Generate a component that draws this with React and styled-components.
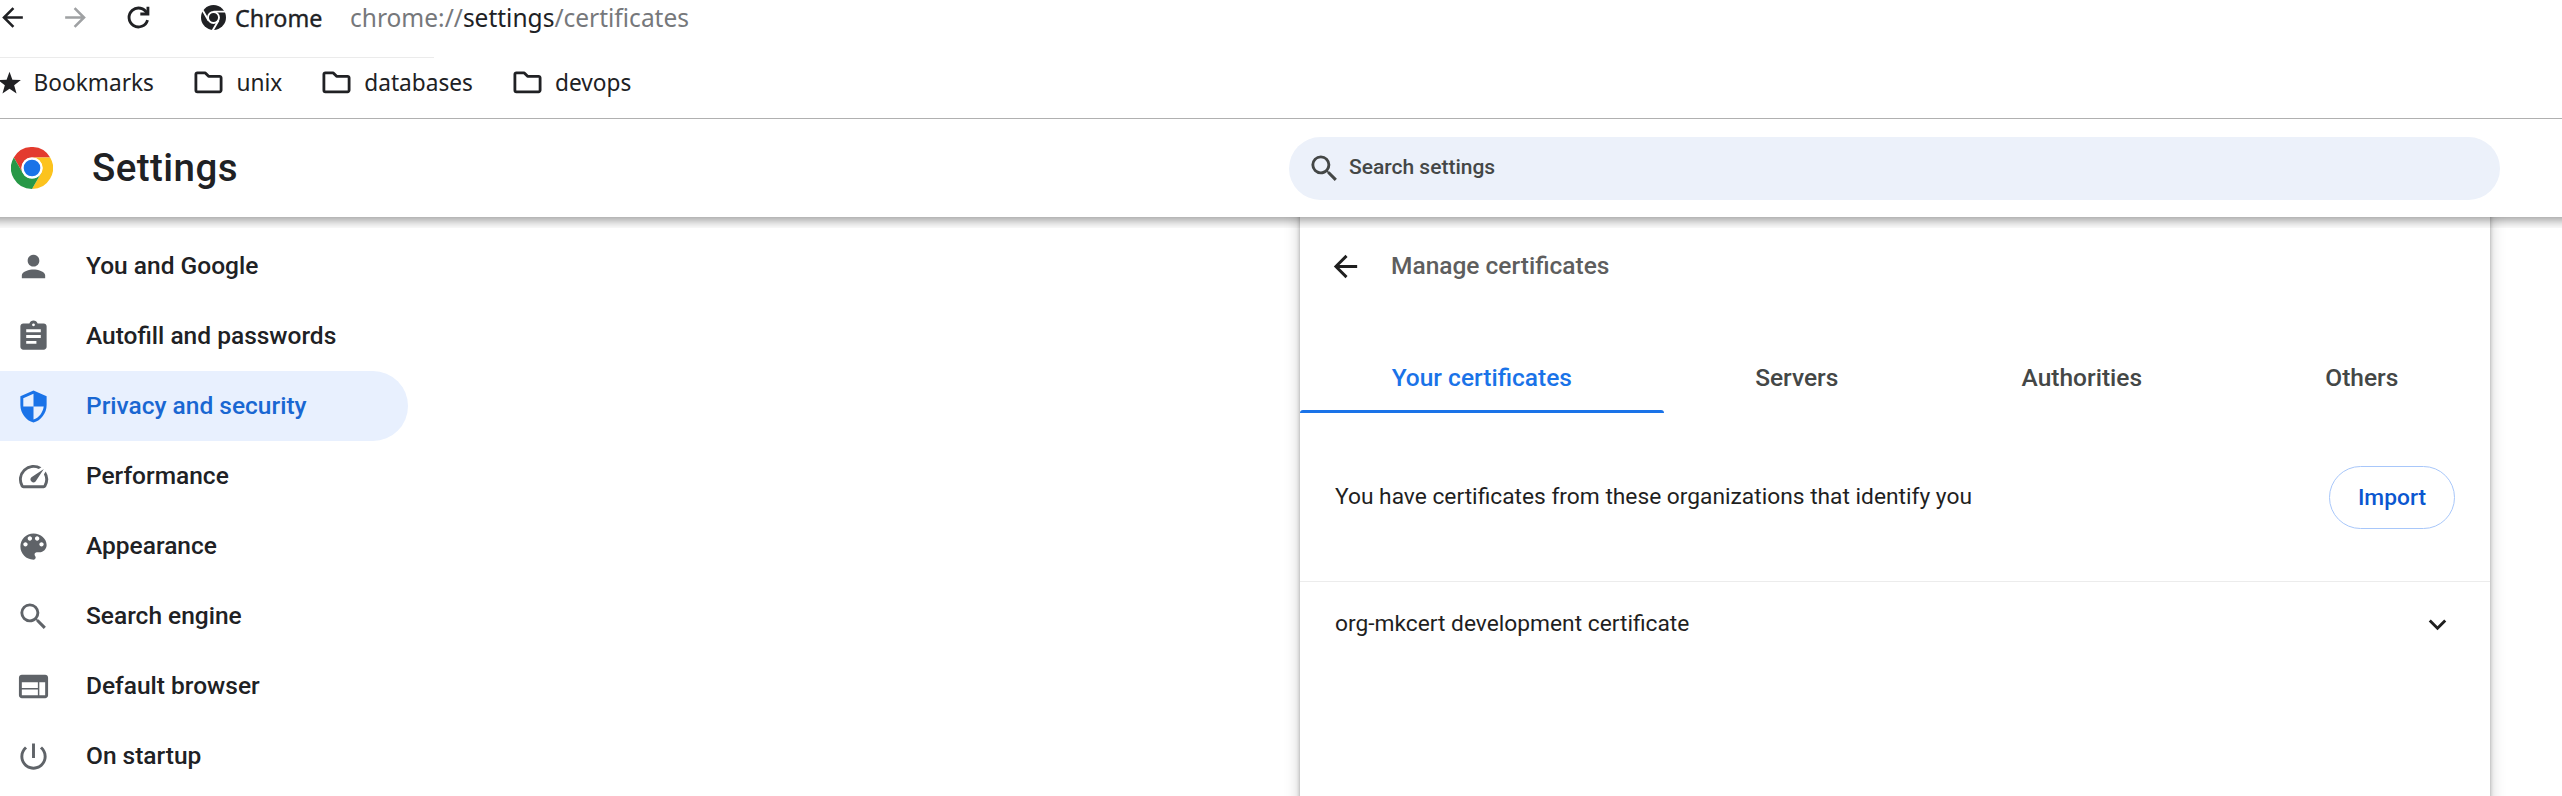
import React from 'react';
import styled, { createGlobalStyle } from 'styled-components';

const Global = createGlobalStyle`
  * { box-sizing: border-box; }
  html, body { margin: 0; background: #fff; overflow: hidden; }
  body { font-family: Roboto, sans-serif; color: #1f1f1f; }
`;

const Page = styled.div`
  height: 796px;
  display: flex;
  flex-direction: column;
  overflow: hidden;
`;

/* Browser chrome */
const Toolbar = styled.div`
  height: 57px;
  flex: none;
  display: flex;
  align-items: flex-start;
  font-family: "Noto Sans", sans-serif;
  font-size: 24.5px;
  line-height: 36px;
`;
const NavIcon = styled.svg`
  width: 31px;
  height: 31px;
  margin-top: 1.5px;
  flex: none;
  fill: ${(p) => (p.$muted ? '#9fa1a3' : '#202124')};
`;
const NavGroup = styled.div`
  display: flex;
  gap: 32px;
  margin-left: -3px;
`;
const SiteChip = styled.div`
  display: flex;
  align-items: flex-start;
  gap: 9px;
  margin-left: 47px;
  width: 149px;
  color: #202124;
  font-size: 23.33px;
  -webkit-text-stroke: 0.35px currentColor;
`;
const ChipIcon = styled.svg`
  width: 25px;
  height: 25px;
  margin-top: 5px;
  flex: none;
`;
const Url = styled.div`
  color: #76787b;
  b { font-weight: 400; color: #202124; }
`;
const BookmarkBar = styled.div`
  height: 62px;
  flex: none;
  display: flex;
  align-items: flex-start;
  border-bottom: 1px solid #b0b0b0;
  font-family: "Noto Sans", sans-serif;
  font-size: 22.67px;
  line-height: 36px;
  color: #202124;
  padding-top: 8px;
`;
const BarHairline = styled.div`
  width: 434px;
  height: 1px;
  margin-top: -8px;
  margin-right: -434px;
  background: #ebebeb;
`;
const Bookmark = styled.div`
  display: flex;
  align-items: center;
  gap: 13px;
  margin-left: ${(p) => p.$left}px;
`;
const BookmarkIcon = styled.svg`
  width: ${(p) => p.$w}px;
  height: 28px;
  margin-bottom: 2px;
  flex: none;
`;

/* Settings header */
const Header = styled.header`
  height: 98px;
  flex: none;
  display: flex;
  align-items: center;
  padding: 0 62px 0 11px;
`;
const Logo = styled.svg`
  width: 42px;
  height: 42px;
  flex: none;
`;
const Title = styled.h1`
  margin: 0 0 0 39px;
  flex: 1;
  font-size: 38.5px;
  font-weight: 500;
  line-height: 44px;
  letter-spacing: 0.44px;
  color: #202124;
`;
const Search = styled.div`
  width: 1211px;
  height: 63px;
  border-radius: 32px;
  background: #ecf1fa;
  display: flex;
  align-items: center;
  padding-left: 18px;
  gap: 7px;
  color: #444746;
  font-size: 21px;
  font-weight: 500;
  line-height: 30px;
  span { padding-bottom: 2px; }
`;
const Icon = styled.svg`
  width: 35px;
  height: 35px;
  flex: none;
  fill: currentColor;
`;

/* Content */
const Main = styled.main`
  flex: 1;
  display: flex;
  justify-content: space-between;
  min-height: 0;
  position: relative;
  overflow: hidden;
  padding-right: 72px;
`;
const DropShadow = styled.div`
  position: absolute;
  top: 0;
  left: -12px;
  right: -12px;
  height: 11px;
  box-shadow: inset 0 8.75px 10.5px -5.25px rgba(0, 0, 0, 0.4);
`;
const Sidebar = styled.nav`
  width: 408px;
  padding-top: 14px;
`;
const MenuItem = styled.div`
  height: 70px;
  display: flex;
  align-items: center;
  padding-left: 16px;
  gap: 35px;
  border-radius: 0 35px 35px 0;
  font-size: 24.5px;
  font-weight: 500;
  color: ${(p) => (p.$active ? '#1967d2' : '#202124')};
  background: ${(p) => (p.$active ? '#e8f0fe' : 'transparent')};
  ${Icon} { color: ${(p) => (p.$active ? '#1a73e8' : '#5f6368')}; }
  span { line-height: 32px; }
`;
const Panel = styled.section`
  width: 1190px;
  margin: -20px 0;
  padding: 20px 0;
  background: #fff;
  box-shadow: 0 0 4px rgba(0, 0, 0, 0.28), 0 0 15px rgba(0, 0, 0, 0.2);
`;
const PanelHead = styled.div`
  height: 98px;
  display: flex;
  align-items: center;
  padding-left: 28px;
  gap: 28px;
  font-size: 24.5px;
  font-weight: 500;
  span { color: #5e5e5e; padding-bottom: 2px; }
`;
const Tabs = styled.div`
  height: 84px;
  margin-top: 14px;
  display: flex;
`;
const Tab = styled.div`
  flex: 1 1 auto;
  display: flex;
  flex-direction: column;
  align-items: center;
  font-size: 24.5px;
  font-weight: 500;
  line-height: 32px;
  padding-top: 33px;
  color: ${(p) => (p.$active ? '#1a73e8' : '#444746')};
  &::after {
    content: "";
    width: 100%;
    height: 3px;
    margin-top: 16px;
    border-radius: 3px 3px 0 0;
    background: ${(p) => (p.$active ? '#1a73e8' : 'transparent')};
  }
`;
const Row = styled.div`
  display: flex;
  align-items: center;
  justify-content: space-between;
  height: ${(p) => p.$h}px;
  padding: 0 35px;
  font-size: 22.75px;
  border-top: ${(p) => (p.$divided ? '1px solid #ececec' : '0')};
  span { padding-bottom: 2px; }
`;
const ImportButton = styled.button`
  width: 126px;
  height: 63px;
  padding: 0;
  border: 1px solid #a8c7fa;
  border-radius: 32px;
  background: #fff;
  color: #0b57d0;
  font: 500 22.75px Roboto, sans-serif;
`;

const PATHS = {
  back: 'M20 11H7.83l5.59-5.59L12 4l-8 8 8 8 1.41-1.41L7.83 13H20v-2z',
  forward: 'M12 4l-1.41 1.41L16.17 11H4v2h12.17l-5.58 5.59L12 20l8-8z',
  person: 'M12 12c2.21 0 4-1.79 4-4s-1.79-4-4-4-4 1.79-4 4 1.79 4 4 4zm0 2c-2.67 0-8 1.34-8 4v2h16v-2c0-2.66-5.33-4-8-4z',
  clipboard: 'M19 3h-4.18C14.4 1.84 13.3 1 12 1c-1.3 0-2.4.84-2.82 2H5c-1.1 0-2 .9-2 2v14c0 1.1.9 2 2 2h14c1.1 0 2-.9 2-2V5c0-1.1-.9-2-2-2zm-7 0c.55 0 1 .45 1 1s-.45 1-1 1-1-.45-1-1 .45-1 1-1zm2 14H7v-2h7v2zm3-4H7v-2h10v2zm0-4H7V7h10v2z',
  shield: 'M12 1L3 5v6c0 5.55 3.84 10.74 9 12 5.16-1.26 9-6.45 9-12V5l-9-4zm0 10.99h7c-.53 4.12-3.28 7.79-7 8.94V12H5V6.3l7-3.11v8.8z',
  speed: 'M20.38 8.57l-1.23 1.85a8 8 0 0 1-.22 7.58H5.07A8 8 0 0 1 15.58 6.85l1.85-1.23A10 10 0 0 0 3.35 19a2 2 0 0 0 1.72 1h13.85a2 2 0 0 0 1.74-1 10 10 0 0 0-.27-10.44zM10.59 15.41a2 2 0 0 0 2.83 0l5.66-8.49-8.49 5.66a2 2 0 0 0 0 2.83z',
  palette: 'M12 3c-4.97 0-9 4.03-9 9s4.03 9 9 9c.83 0 1.5-.67 1.5-1.5 0-.39-.15-.74-.39-1.01-.23-.26-.38-.61-.38-.99 0-.83.67-1.5 1.5-1.5H16c2.76 0 5-2.24 5-5 0-4.42-4.03-8-9-8zm-5.5 9c-.83 0-1.5-.67-1.5-1.5S5.67 9 6.5 9 8 9.67 8 10.5 7.33 12 6.5 12zm3-4C8.67 8 8 7.33 8 6.5S8.67 5 9.5 5s1.5.67 1.5 1.5S10.33 8 9.5 8zm5 0c-.83 0-1.5-.67-1.5-1.5S13.67 5 14.5 5s1.5.67 1.5 1.5S15.33 8 14.5 8zm3 4c-.83 0-1.5-.67-1.5-1.5S16.67 9 17.5 9s1.5.67 1.5 1.5-.67 1.5-1.5 1.5z',
  search: 'M15.5 14h-.79l-.28-.27A6.471 6.471 0 0 0 16 9.5 6.5 6.5 0 1 0 9.5 16c1.61 0 3.09-.59 4.23-1.57l.27.28v.79l5 4.99L20.49 19l-4.99-5zm-6 0C7.01 14 5 11.99 5 9.5S7.01 5 9.5 5 14 7.01 14 9.5 11.99 14 9.5 14z',
  web: 'M20 4H4c-1.1 0-1.99.9-1.99 2L2 18c0 1.1.9 2 2 2h16c1.1 0 2-.9 2-2V6c0-1.1-.9-2-2-2zm-5 14H4v-4h11v4zm0-5H4V9h11v4zm5 5h-4V9h4v9z',
  power: 'M13 3h-2v10h2V3zm4.83 2.17l-1.42 1.42C17.99 7.86 19 9.81 19 12c0 3.87-3.13 7-7 7s-7-3.13-7-7c0-2.19 1.01-4.14 2.58-5.42L6.17 5.17C4.23 6.82 3 9.26 3 12c0 4.97 4.03 9 9 9s9-4.03 9-9c0-2.74-1.23-5.18-3.17-6.83z',
  expand: 'M16.59 8.59L12 13.17 7.41 8.59 6 10l6 6 6-6z',
};

const Glyph = ({ name }) => (
  <Icon viewBox="0 0 24 24"><path d={PATHS[name]} /></Icon>
);

const Folder = () => (
  <BookmarkIcon $w={29} viewBox="0 0 29 28" fill="none" stroke="#202124" strokeWidth="2.8" strokeLinejoin="round">
    <path d="M1.9 6.3V22.3a1.5 1.5 0 0 0 1.5 1.5h22.2a1.5 1.5 0 0 0 1.5-1.5V9.8a1.5 1.5 0 0 0-1.5-1.5H14.6L11.3 4.9H3.4a1.5 1.5 0 0 0-1.5 1.4z" />
  </BookmarkIcon>
);

const MENU = [
  ['person', 'You and Google'],
  ['clipboard', 'Autofill and passwords'],
  ['shield', 'Privacy and security'],
  ['speed', 'Performance'],
  ['palette', 'Appearance'],
  ['search', 'Search engine'],
  ['web', 'Default browser'],
  ['power', 'On startup'],
];
const TABS = ['Your certificates', 'Servers', 'Authorities', 'Others'];

export default function App() {
  return (
    <Page>
      <Global />
      <Toolbar>
        <NavGroup>
          <NavIcon viewBox="0 0 24 24"><path d={PATHS.back} /></NavIcon>
          <NavIcon $muted viewBox="0 0 24 24"><path d={PATHS.forward} /></NavIcon>
          <NavIcon viewBox="0 0 24 24">
            <g fill="none" stroke="#202124" strokeWidth="2.2">
              <path d="M18.6 8.9A7.3 7.3 0 1 0 19 14" />
              <path d="M19.3 3.6V9.3H13.4" />
            </g>
          </NavIcon>
        </NavGroup>
        <SiteChip>
          <ChipIcon viewBox="0 0 24 24">
            <circle cx="12" cy="12" r="12" fill="#202124" />
            <circle cx="12" cy="12" r="5.3" fill="none" stroke="#fff" strokeWidth="1.8" />
            <path d="M12 6.4H23M7.2 14.8L1.7 5.3M16.8 14.8L11.3 24.3" stroke="#fff" strokeWidth="1.8" />
          </ChipIcon>
          Chrome
        </SiteChip>
        <Url>chrome://<b>settings</b>/certificates</Url>
      </Toolbar>
      <BookmarkBar>
        <BarHairline />
        <Bookmark $left={-2.5}>
          <BookmarkIcon $w={23} viewBox="0 0 23 28">
            <path fill="#202124" d="M11.5 3.8L14.4 11.85 22.9 12.1 16.15 17.3 18.55 25.5 11.5 20.7 4.45 25.5 6.85 17.3 .1 12.1 8.6 11.85z" />
          </BookmarkIcon>
          Bookmarks
        </Bookmark>
        <Bookmark $left={40.5}><Folder />unix</Bookmark>
        <Bookmark $left={40}><Folder />databases</Bookmark>
        <Bookmark $left={40}><Folder />devops</Bookmark>
      </BookmarkBar>
      <Header>
        <Logo viewBox="0 0 48 48">
          <circle cx="24" cy="24" r="24" fill="#fff" />
          <path fill="#e33b2e" d="M3.2 12A24 24 0 0 1 44.8 12H24A12 12 0 0 0 13.6 30z" />
          <path fill="#fcc31e" d="M44.8 12A24 24 0 0 1 24 48L34.4 30A12 12 0 0 0 24 12z" />
          <path fill="#279847" d="M3.2 12A24 24 0 0 0 24 48L34.4 30A12 12 0 0 1 13.6 30z" />
          <circle cx="24" cy="24" r="12" fill="#fff" />
          <circle cx="24" cy="24" r="9.5" fill="#1a73e8" />
        </Logo>
        <Title>Settings</Title>
        <Search><Glyph name="search" /><span>Search settings</span></Search>
      </Header>
      <Main>
        <Sidebar>
          {MENU.map(([icon, label]) => (
            <MenuItem key={label} $active={icon === 'shield'}>
              <Glyph name={icon} /><span>{label}</span>
            </MenuItem>
          ))}
        </Sidebar>
        <Panel>
          <PanelHead><Glyph name="back" /><span>Manage certificates</span></PanelHead>
          <Tabs>
            {TABS.map((t, i) => <Tab key={t} $active={i === 0}>{t}</Tab>)}
          </Tabs>
          <Row $h={168}>
            <span>You have certificates from these organizations that identify you</span>
            <ImportButton>Import</ImportButton>
          </Row>
          <Row $h={86} $divided>
            <span>org-mkcert development certificate</span>
            <Glyph name="expand" />
          </Row>
        </Panel>
        <DropShadow />
      </Main>
    </Page>
  );
}
